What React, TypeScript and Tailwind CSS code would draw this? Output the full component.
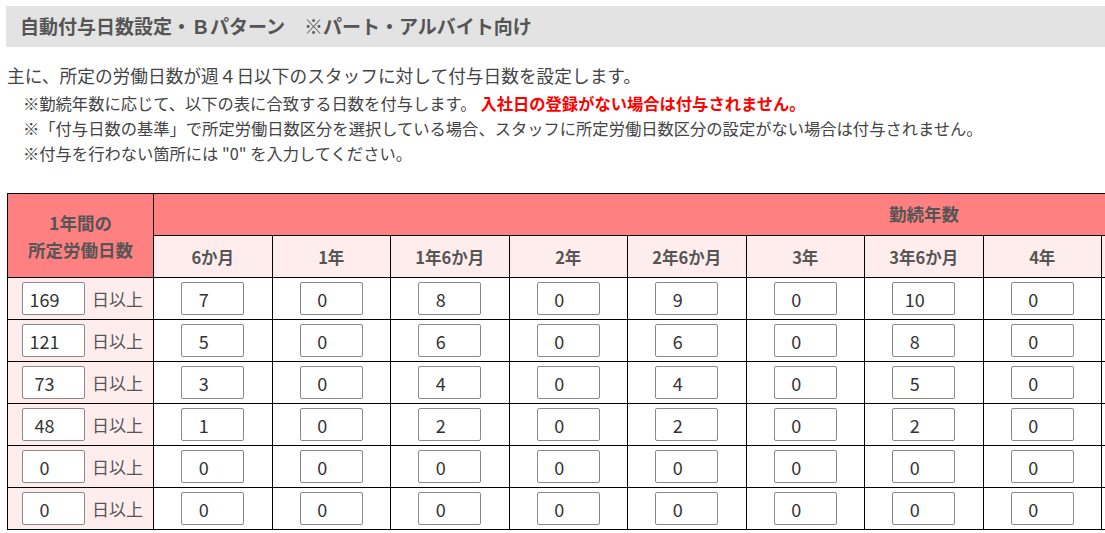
import React from 'react';

const FONT = "font-['Noto_Sans_CJK_JP','Noto_Sans',sans-serif]";

const periods = ['6か月', '1年', '1年6か月', '2年', '2年6か月', '3年', '3年6か月', '4年'];

const rows = [
  { days: '169', values: ['7', '0', '8', '0', '9', '0', '10', '0'] },
  { days: '121', values: ['5', '0', '6', '0', '6', '0', '8', '0'] },
  { days: '73', values: ['3', '0', '4', '0', '4', '0', '5', '0'] },
  { days: '48', values: ['1', '0', '2', '0', '2', '0', '2', '0'] },
  { days: '0', values: ['0', '0', '0', '0', '0', '0', '0', '0'] },
  { days: '0', values: ['0', '0', '0', '0', '0', '0', '0', '0'] },
];

function NumInput({ value }: { value: string }) {
  return (
    <input
      type="text"
      defaultValue={value}
      className="w-[63px] h-[33px] border border-[#8a8a8a] rounded-[2px] bg-white text-center pl-[2px] pr-[20px] text-[18px] text-[#333] outline-none"
    />
  );
}

export default function App() {
  return (
    <div className={`w-full overflow-hidden bg-white pl-[6px] pt-[6px] pb-4 ${FONT}`}>
      {/* Title bar */}
      <div className="h-[41px] bg-[#e3e3e3] flex items-center pl-[14px]">
        <h2 className="text-[19px] font-bold text-[#555] whitespace-nowrap">
          自動付与日数設定・Ｂパターン　※パート・アルバイト向け
        </h2>
      </div>

      {/* Description */}
      <p className="mt-[16px] pl-px text-[17.7px] leading-[24px] text-[#444] whitespace-nowrap">
        主に、所定の労働日数が週４日以下のスタッフに対して付与日数を設定します。
      </p>
      <div className="mt-[4px] pl-[17px] text-[16.3px] leading-[25px] text-[#444] whitespace-nowrap">
        <p>
          ※勤続年数に応じて、以下の表に合致する日数を付与します。
          <span className="ml-[4px] font-bold text-[#ff0000]">入社日の登録がない場合は付与されません。</span>
        </p>
        <p>※「付与日数の基準」で所定労働日数区分を選択している場合、スタッフに所定労働日数区分の設定がない場合は付与されません。</p>
        <p>※付与を行わない箇所には "0" を入力してください。</p>
      </div>

      {/* Table (continues past the right edge of the window) */}
      <table className="mt-[27px] ml-px w-[1687px] min-w-[1687px] border-collapse table-fixed text-[#555]">
        <colgroup>
          <col className="w-[146px]" />
          {periods.map((p) => (
            <col key={p} className="w-[118.5px]" />
          ))}
          <col className="w-[593px]" />
        </colgroup>
        <thead>
          <tr className="h-[42px]">
            <th
              rowSpan={2}
              className="border border-black bg-[#ff8080] text-[17.5px] font-bold leading-[27px] text-[#555]"
            >
              1年間の
              <br />
              所定労働日数
            </th>
            <th colSpan={periods.length + 1} className="border border-black bg-[#ff8080] text-[17.5px] font-bold text-[#555]">
              勤続年数
            </th>
          </tr>
          <tr className="h-[42px]">
            {periods.map((p) => (
              <th key={p} className="border border-black bg-[#ffeded] text-[16.5px] font-bold text-[#555] pt-[2px]">
                {p}
              </th>
            ))}
            <th className="border border-black bg-[#ffeded]" />
          </tr>
        </thead>
        <tbody>
          {rows.map((r, i) => (
            <tr key={i} className="h-[42px]">
              <td className="border border-black bg-[#ffeded]">
                <div className="flex items-center justify-center gap-[7px] pl-[4px]">
                  <NumInput value={r.days} />
                  <span className="text-[17px] text-[#555] whitespace-nowrap">日以上</span>
                </div>
              </td>
              {r.values.map((v, j) => (
                <td key={j} className="border border-black bg-white">
                  <div className="flex items-center justify-center">
                    <NumInput value={v} />
                  </div>
                </td>
              ))}
              <td className="border border-black bg-white" />
            </tr>
          ))}
        </tbody>
      </table>
    </div>
  );
}
